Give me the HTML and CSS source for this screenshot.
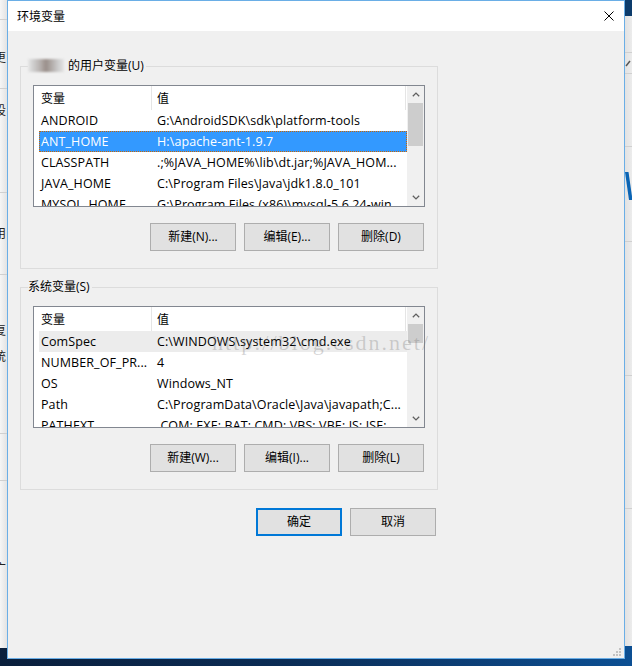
FILE: index.html
```html
<!DOCTYPE html>
<html lang="zh-CN">
<head>
<meta charset="utf-8">
<title>环境变量</title>
<link rel="stylesheet" href="styles.css">
</head>
<body>
<div class="desktop">
  <div class="bgwin bg-left">
    <div class="cell h20"></div>
    <div class="cell h69"><span class="frag p30">更</span></div>
    <div class="cell h104"><span class="frag p14">设</span></div>
    <div class="cell h82"><span class="frag p33">用</span></div>
    <div class="cell h159"><span class="frag p48">复</span><span class="frag p12">统</span></div>
    <div class="cell h47"></div>
    <div class="cell rest"><span class="frag p80">广</span></div>
  </div>
  <div class="bgwin bg-right">
    <div class="rtop"></div>
    <div class="cell h37"></div>
    <div class="cell h21"><svg class="pencil" width="7" height="8" viewBox="0 0 7 8"><path d="M1 7 L5 2" stroke="#555" stroke-width="1.5"/></svg></div>
    <div class="cell h73"></div>
    <div class="cell h95"><svg class="vglyph" width="7" height="28" viewBox="0 0 7 28"><polygon points="0,0 3.5,0 7.5,28 4,28" fill="#0a64b4"/></svg></div>
    <div class="cell h134"></div>
    <div class="cell h133"></div>
    <div class="cell rest"></div>
  </div>

  <div class="window">
    <div class="titlebar">
      <span class="title">环境变量</span>
      <span class="close" role="button" aria-label="关闭"><svg width="10" height="10" viewBox="0 0 10 10"><path d="M0.5 0.5 L9.5 9.5 M9.5 0.5 L0.5 9.5" stroke="#000" stroke-width="1" fill="none"/></svg></span>
    </div>
    <div class="content">
      <fieldset class="group">
        <legend><span class="blur"></span>的用户变量(U)</legend>
        <div class="listview">
          <div class="lv-main">
            <div class="lv-header"><div class="hcell c1">变量</div><div class="hcell c2">值</div></div>
            <div class="row"><span class="name">ANDROID</span><span class="val">G:\AndroidSDK\sdk\platform-tools</span></div>
            <div class="row selected"><span class="name">ANT_HOME</span><span class="val">H:\apache-ant-1.9.7</span></div>
            <div class="row"><span class="name">CLASSPATH</span><span class="val">.;%JAVA_HOME%\lib\dt.jar;%JAVA_HOM...</span></div>
            <div class="row"><span class="name">JAVA_HOME</span><span class="val">C:\Program Files\Java\jdk1.8.0_101</span></div>
            <div class="row"><span class="name">MYSQL_HOME</span><span class="val">G:\Program Files (x86)\mysql-5.6.24-win...</span></div>
          </div>
          <div class="scrollbar">
            <div class="sb-arrow"><svg width="8" height="5" viewBox="0 0 8 5"><polyline points="0.8,4.3 4,1.1 7.2,4.3" fill="none" stroke="#606060" stroke-width="1.3"/></svg></div>
            <div class="sb-track"><div class="sb-thumb big"></div></div>
            <div class="sb-arrow"><svg width="8" height="5" viewBox="0 0 8 5"><polyline points="0.8,0.7 4,3.9 7.2,0.7" fill="none" stroke="#606060" stroke-width="1.3"/></svg></div>
          </div>
        </div>
        <div class="btnrow">
          <button class="btn">新建(N)...</button>
          <button class="btn">编辑(E)...</button>
          <button class="btn">删除(D)</button>
        </div>
      </fieldset>

      <fieldset class="group">
        <legend>系统变量(S)</legend>
        <div class="listview">
          <div class="lv-main">
            <div class="lv-header"><div class="hcell c1">变量</div><div class="hcell c2">值</div></div>
            <div class="row hot"><span class="name">ComSpec</span><span class="val">C:\WINDOWS\system32\cmd.exe</span></div>
            <div class="row"><span class="name">NUMBER_OF_PR...</span><span class="val">4</span></div>
            <div class="row"><span class="name">OS</span><span class="val">Windows_NT</span></div>
            <div class="row"><span class="name">Path</span><span class="val">C:\ProgramData\Oracle\Java\javapath;C...</span></div>
            <div class="row"><span class="name">PATHEXT</span><span class="val">.COM;.EXE;.BAT;.CMD;.VBS;.VBE;.JS;.JSE;...</span></div>
          </div>
          <div class="scrollbar">
            <div class="sb-arrow"><svg width="8" height="5" viewBox="0 0 8 5"><polyline points="0.8,4.3 4,1.1 7.2,4.3" fill="none" stroke="#606060" stroke-width="1.3"/></svg></div>
            <div class="sb-track"><div class="sb-thumb small"></div></div>
            <div class="sb-arrow"><svg width="8" height="5" viewBox="0 0 8 5"><polyline points="0.8,0.7 4,3.9 7.2,0.7" fill="none" stroke="#606060" stroke-width="1.3"/></svg></div>
          </div>
        </div>
        <div class="btnrow">
          <button class="btn">新建(W)...</button>
          <button class="btn">编辑(I)...</button>
          <button class="btn">删除(L)</button>
        </div>
      </fieldset>

      <div class="dlg-buttons">
        <button class="btn default">确定</button>
        <button class="btn">取消</button>
      </div>
    </div>

    <svg class="grip" width="8" height="8" viewBox="0 0 8 8">
      <rect x="6" y="0" width="2" height="2" fill="#c2c2c2"/>
      <rect x="3" y="3" width="2" height="2" fill="#c2c2c2"/>
      <rect x="6" y="3" width="2" height="2" fill="#c2c2c2"/>
      <rect x="0" y="6" width="2" height="2" fill="#c2c2c2"/>
      <rect x="3" y="6" width="2" height="2" fill="#c2c2c2"/>
      <rect x="6" y="6" width="2" height="2" fill="#c2c2c2"/>
    </svg>
    <div class="watermark">http://blog.csdn.net/</div>
  </div>
</div>
</body>
</html>
```
FILE: styles.css
```css
* { box-sizing: border-box; }
html, body { margin: 0; padding: 0; }
body {
  width: 632px;
  height: 666px;
  overflow: hidden;
  font-family: "Open Sans", "Noto Sans CJK SC", sans-serif;
  font-size: 12px;
  color: #000;
}
.desktop {
  position: relative;
  width: 632px;
  height: 666px;
  background: linear-gradient(90deg, #0a1f3c 0%, #0b2c55 45%, #0c4f93 100%);
}

/* background windows peeking out at the sides */
.bgwin {
  position: absolute;
  top: 0;
  display: flex;
  flex-direction: column;
  overflow: hidden;
}
.bg-left {
  left: 0;
  width: 7px;
  height: 648px;
  background: linear-gradient(90deg, #f6f6f6, #e3e3e3);
}
.bg-right {
  left: 625px;
  width: 7px;
  height: 646px;
  background: linear-gradient(90deg, #e2e2e2, #ececec);
}
.cell {
  flex: none;
  border-bottom: 1px solid #d0d0d0;
  display: flex;
  flex-direction: column;
}
.cell.rest { flex: 1; border-bottom: none; }
.h20 { height: 20px; }
.h21 { height: 21px; }
.h37 { height: 37px; }
.h47 { height: 47px; }
.h69 { height: 69px; }
.h73 { height: 73px; }
.h82 { height: 82px; }
.h95 { height: 95px; }
.h104 { height: 104px; }
.h133 { height: 133px; }
.h134 { height: 134px; }
.h159 { height: 159px; }
.rtop { flex: none; height: 16px; background: #0c3b6b; }
.frag {
  font-family: "Noto Sans CJK SC", sans-serif;
  font-size: 12px;
  line-height: 14px;
  margin-left: -6px;
  color: #222;
  white-space: nowrap;
}
.p12 { margin-top: 12px; }
.p14 { margin-top: 14px; }
.p30 { margin-top: 30px; }
.p33 { margin-top: 33px; }
.p48 { margin-top: 48px; }
.p80 { margin-top: 80px; }
.pencil { margin-top: 6px; display: block; }
.vglyph { margin-top: 25px; display: block; }

/* dialog window */
.window {
  position: absolute;
  left: 7px;
  top: 0;
  width: 618px;
  height: 659px;
  border: 1px solid #6aaee6;
  background: #f0f0f0;
}
.titlebar {
  height: 30px;
  background: #fff;
  display: flex;
  align-items: center;
  justify-content: space-between;
  padding: 0 10px 0 9px;
}
.title {
  font-family: "Noto Sans CJK SC", sans-serif;
  font-size: 12px;
  line-height: 16px;
  margin-top: -1px;
}
.close { display: block; width: 10px; height: 10px; }
.close svg { display: block; }

.content { padding: 27px 0 0 12px; }

.group {
  margin: 0;
  min-width: 0;
  width: 418px;
  border: 1px solid #dcdcdc;
  padding: 11px 12px 17px 12px;
}
.group + .group { margin-top: 10px; }
.group legend {
  margin-left: -5px;
  padding: 0 2px 0 0;
  height: 16px;
  line-height: 16px;
  white-space: nowrap;
}
.blur {
  display: inline-block;
  width: 36px;
  height: 13px;
  margin-right: 4px;
  vertical-align: -2px;
  background: linear-gradient(90deg, #e6e6e6 0%, #cfcfcf 14%, #b9b4b2 32%, #9a8f8a 50%, #b5b0ae 68%, #cdcdcd 84%, #e4e4e4 100%);
  filter: blur(0.8px);
}

.listview {
  height: 122px;
  border: 1px solid #828790;
  background: #fff;
  display: flex;
}
.lv-main {
  width: 373px;
  flex: none;
  overflow: hidden;
}
.lv-header { height: 24px; display: flex; }
.hcell {
  flex: none;
  line-height: 24px;
  border-right: 1px solid #e5e5e5;
  font-family: "Noto Sans CJK SC", sans-serif;
  font-size: 12px;
}
.hcell.c1 { width: 118px; padding-left: 7px; }
.hcell.c2 { width: 254px; padding-left: 5px; }
.row {
  height: 21px;
  margin-left: 5px;
  display: flex;
  font-size: 12.5px;
  letter-spacing: 0.1px;
  line-height: 21px;
  white-space: nowrap;
}
.row .name { flex: none; width: 112px; padding-left: 2px; overflow: hidden; }
.row .val { flex: 1; padding-left: 6px; overflow: hidden; }
.row.selected {
  background: #3399ff;
  color: #fff;
  outline: 1px dotted #cc6600;
  outline-offset: -1px;
}
.row.hot { background: #ececec; }

.scrollbar {
  width: 17px;
  flex: none;
  background: #f0f0f0;
  display: flex;
  flex-direction: column;
}
.sb-arrow {
  height: 17px;
  flex: none;
  display: flex;
  align-items: center;
  justify-content: center;
}
.sb-arrow svg { display: block; }
.sb-track { flex: 1; padding: 0 1px; }
.sb-thumb { background: #cdcdcd; }
.sb-thumb.big { height: 43px; }
.sb-thumb.small { height: 19px; }

.btnrow {
  display: flex;
  justify-content: flex-end;
  gap: 8px;
  margin-top: 16px;
  padding-right: 1px;
}
.btn {
  width: 86px;
  height: 28px;
  margin: 0;
  padding: 0;
  border: 1px solid #adadad;
  background: #e1e1e1;
  color: #000;
  font-family: "Open Sans", "Noto Sans CJK SC", sans-serif;
  font-size: 12px;
  line-height: 26px;
  text-align: center;
}
.btn.default { border: 2px solid #0078d7; line-height: 24px; }
.dlg-buttons {
  width: 418px;
  display: flex;
  justify-content: flex-end;
  gap: 8px;
  margin-top: 18px;
  padding-right: 2px;
}

.grip {
  position: absolute;
  right: 3px;
  bottom: 2px;
  display: block;
}
.watermark {
  position: absolute;
  left: 204px;
  top: 331px;
  font-family: "Liberation Serif", serif;
  font-size: 22px;
  line-height: 22px;
  letter-spacing: 2px;
  color: rgba(110, 110, 110, 0.28);
  white-space: nowrap;
  pointer-events: none;
}
```
